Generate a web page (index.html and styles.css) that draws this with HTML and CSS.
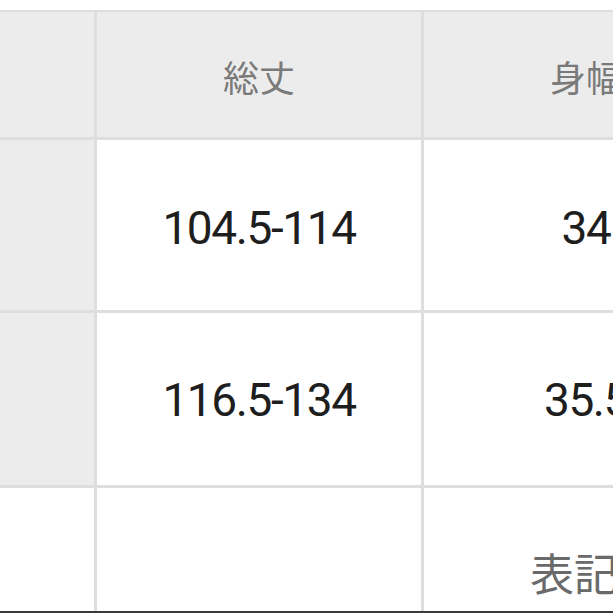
FILE: index.html
```html
<!DOCTYPE html>
<html lang="ja">
<head>
<meta charset="utf-8">
<title>サイズ表</title>
<link rel="stylesheet" href="styles.css">
</head>
<body>
<div class="page">
  <div class="table">
    <div class="cell head side"></div>
    <div class="cell head">総丈</div>
    <div class="cell head">身幅</div>

    <div class="cell side"></div>
    <div class="cell num r1">104.5-114</div>
    <div class="cell num r1">34</div>

    <div class="cell side"></div>
    <div class="cell num r2">116.5-134</div>
    <div class="cell num r2">35.5</div>

    <div class="cell blank"></div>
    <div class="cell blank"></div>
    <div class="cell note">表記</div>
  </div>
</div>
</body>
</html>
```
FILE: styles.css
```css
html, body {
  margin: 0;
  padding: 0;
  background: #ffffff;
  overflow: hidden;
}

.page {
  width: 613px;
  height: 613px;
  overflow: hidden;
  padding-top: 10px;
  box-sizing: border-box;
  position: relative;
}

.page::after {
  content: "";
  position: absolute;
  left: 0;
  right: 0;
  bottom: 0;
  height: 2px;
  background: #3a3a3a;
}

.table {
  display: grid;
  grid-template-columns: 94px 324px 324px;
  grid-template-rows: 125px 170px 172px 130px;
  gap: 3px;
  padding-top: 2px;
  background: #dedede;
  width: max-content;
}

.cell {
  background: #ffffff;
  display: flex;
  align-items: center;
  justify-content: center;
  font-family: "Noto Sans CJK JP", "Noto Sans", sans-serif;
}

.head {
  background: #ececec;
  color: #7a7a7a;
  font-size: 36px;
  padding-top: 2px;
}

.side {
  background: #ececec;
}

.num {
  font-family: Roboto, "Noto Sans", sans-serif;
  font-size: 46px;
  letter-spacing: -1.4px;
  color: #1e1e1e;
}

.r1 {
  padding-top: 6px;
}

.r2 {
  padding-top: 2px;
}

.note {
  justify-content: flex-start;
  align-items: flex-start;
  padding-left: 106px;
  padding-top: 62px;
  color: #6a6a6a;
  font-size: 44px;
  line-height: 1;
}
```
